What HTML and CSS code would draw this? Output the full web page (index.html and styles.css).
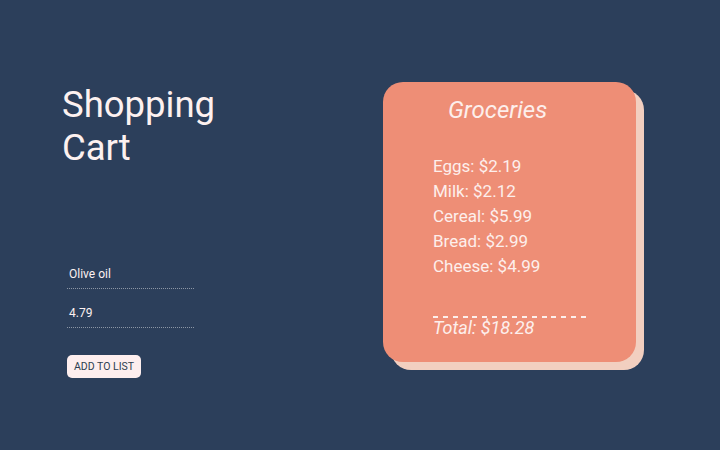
FILE: index.html
```html
<!DOCTYPE html>
<html>
<head>
<meta charset="utf-8">
<link rel="stylesheet" href="styles.css">
</head>
<body>
<div class="page">
  <div class="left">
    <h1 class="title">Shopping<br>Cart</h1>
    <div class="form">
      <div class="field">Olive oil</div>
      <div class="field">4.79</div>
      <button class="add">ADD TO LIST</button>
    </div>
  </div>
  <div class="card">
    <h2 class="card-title">Groceries</h2>
    <ul class="items">
      <li>Eggs: $2.19</li>
      <li>Milk: $2.12</li>
      <li>Cereal: $5.99</li>
      <li>Bread: $2.99</li>
      <li>Cheese: $4.99</li>
    </ul>
    <div class="dash"></div>
    <div class="total">Total: $18.28</div>
  </div>
</div>
</body>
</html>
```
FILE: styles.css
```css
html, body {
  margin: 0;
  padding: 0;
  background: #2c3f5b;
  width: 720px;
  height: 450px;
  overflow: hidden;
  font-family: Roboto, "Liberation Sans", sans-serif;
}
.page {
  display: flex;
  padding: 82px 0 0 62px;
}
.left {
  width: 321px;
  display: flex;
  flex-direction: column;
}
.title {
  margin: 1px 0 0 0;
  font-size: 36.5px;
  line-height: 43px;
  font-weight: 400;
  color: #fdf1f0;
}
.form {
  margin-top: 97px;
  margin-left: 5px;
  display: flex;
  flex-direction: column;
  align-items: flex-start;
  gap: 16px;
}
.field {
  width: 123px;
  padding: 0 2px 6px 2px;
  font-size: 12px;
  line-height: 16px;
  color: #fdf1f0;
  border-bottom: 1px dotted #8c96a5;
}
.add {
  margin-top: 11px;
  width: 74px;
  height: 23px;
  padding: 0;
  border: none;
  border-radius: 5px;
  background: #fdeeee;
  color: #2c3e50;
  font-family: Roboto, "Liberation Sans", sans-serif;
  font-size: 10.5px;
  font-weight: 400;
  line-height: 23px;
}
.card {
  width: 253px;
  height: 280px;
  box-sizing: border-box;
  background: #ee8e76;
  border-radius: 20px;
  box-shadow: 8px 8px 0 #f2cfc0;
  padding: 14px 0 0 50px;
  color: #fdefec;
}
.card-title {
  margin: 0 0 0 15px;
  font-size: 24px;
  line-height: 28px;
  font-style: italic;
  font-weight: 400;
}
.items {
  list-style: none;
  margin: 30px 0 0 0;
  padding: 0;
  font-size: 17px;
  line-height: 25px;
}
.dash {
  margin-top: 37px;
  width: 153px;
  height: 2px;
  background: repeating-linear-gradient(90deg, #fdefec 0 5px, transparent 5px 9.87px);
}
.total {
  font-size: 18px;
  line-height: 20px;
  font-style: italic;
}
```
